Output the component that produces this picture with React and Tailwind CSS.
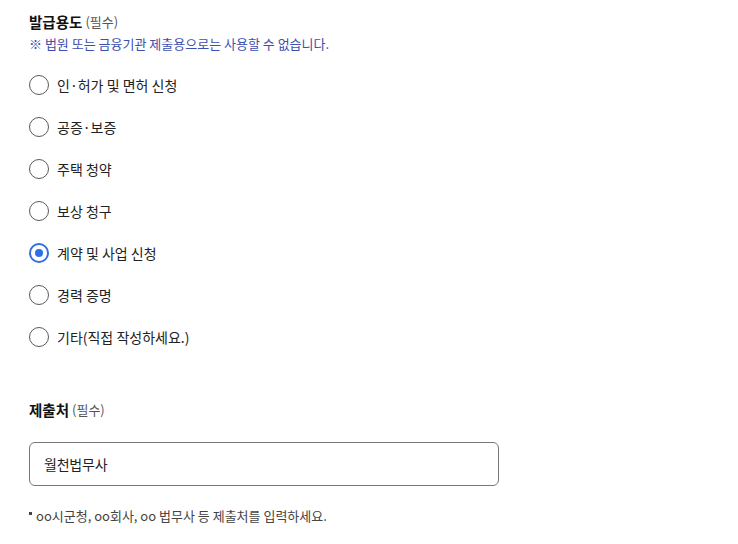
import { useState } from 'react'

const OPTIONS = [
  '인·허가 및 면허 신청',
  '공증·보증',
  '주택 청약',
  '보상 청구',
  '계약 및 사업 신청',
  '경력 증명',
  '기타(직접 작성하세요.)',
]

function Radio({ checked }) {
  return checked ? (
    <span className="flex h-[20px] w-[20px] items-center justify-center rounded-full border-2 border-[#2f6fe4] bg-white">
      <span className="h-[8px] w-[8px] rounded-full bg-[#2f6fe4]" />
    </span>
  ) : (
    <span className="h-[20px] w-[20px] rounded-full border-[1.5px] border-[#5a5a5a] bg-white" />
  )
}

export default function App() {
  const [value, setValue] = useState('계약 및 사업 신청')

  return (
    <div
      className="min-h-[544px] bg-white pl-[29px] pt-[12px] text-[#222]"
      style={{ fontFamily: '"Noto Sans CJK KR", "Noto Sans", sans-serif' }}
    >
      {/* 발급용도 */}
      <div className="flex h-[20px] items-center">
        <span className="text-[14.5px] font-bold text-[#111]">발급용도</span>
        <span className="ml-[3px] text-[13px] text-[#555]">(필수)</span>
      </div>
      <p className="mt-[3px] h-[18px] text-[13px] leading-[18px] text-[#3d4fae]">
        ※ 법원 또는 금융기관 제출용으로는 사용할 수 없습니다.
      </p>

      <ul className="mt-[11px]">
        {OPTIONS.map((o) => (
          <li key={o}>
            <label className="flex h-[42px] cursor-pointer items-center gap-[8px]" onClick={() => setValue(o)}>
              <Radio checked={value === o} />
              <span className="text-[14px] text-[#222]">{o}</span>
            </label>
          </li>
        ))}
      </ul>

      {/* 제출처 */}
      <div className="mt-[42px] flex h-[20px] items-center">
        <span className="text-[14.5px] font-bold text-[#111]">제출처</span>
        <span className="ml-[3px] text-[13px] text-[#555]">(필수)</span>
      </div>
      <div className="mt-[22px] flex h-[44px] w-[470px] items-center rounded-[6px] border border-[#777] px-[14px]">
        <span className="text-[14px] tracking-[-0.2px] text-[#222]">월천법무사</span>
      </div>
      <p className="mt-[21px] flex h-[18px] items-center text-[13px] text-[#444]">
        <span className="mr-[4px] mb-[6px] h-[3px] w-[3px] bg-[#444]" />
        oo시군청, oo회사, oo 법무사 등 제출처를 입력하세요.
      </p>
    </div>
  )
}
